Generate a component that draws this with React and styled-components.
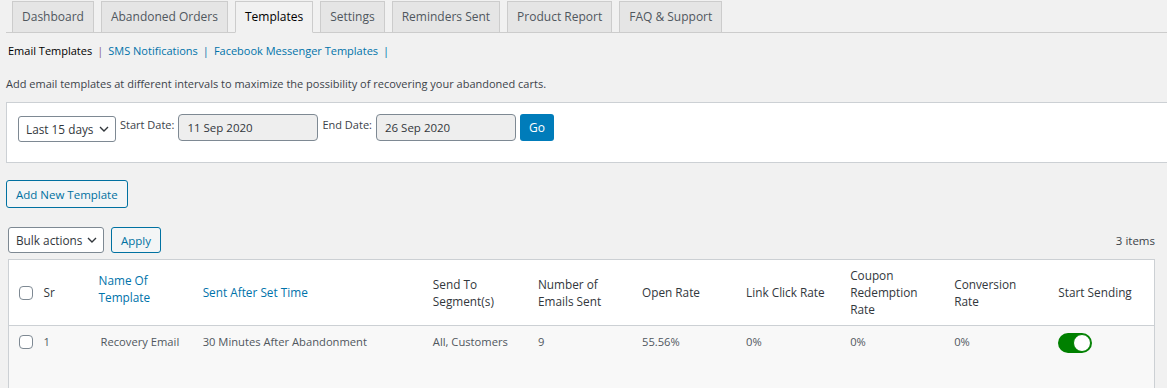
import React from "react";
import styled, { createGlobalStyle } from "styled-components";

const GlobalStyle = createGlobalStyle`
  body {
    margin: 0;
    background: #f1f1f1;
    font-family: "Open Sans", "Noto Sans", sans-serif;
    font-size: 11px;
    color: #3c434a;
    overflow: hidden;
  }
`;

const tabs = [
  "Dashboard",
  "Abandoned Orders",
  "Templates",
  "Settings",
  "Reminders Sent",
  "Product Report",
  "FAQ & Support",
];

const columns = [
  { key: "sr", width: 55, label: ["Sr"] },
  { key: "name", width: 104, label: ["Name Of", "Template"], sortable: true, raise: true },
  { key: "time", width: 230, label: ["Sent After Set Time"], sortable: true },
  { key: "segment", width: 105, label: ["Send To", "Segment(s)"] },
  { key: "sent", width: 104, label: ["Number of", "Emails Sent"] },
  { key: "open", width: 104, label: ["Open Rate"] },
  { key: "click", width: 104, label: ["Link Click Rate"] },
  { key: "coupon", width: 104, label: ["Coupon", "Redemption", "Rate"] },
  { key: "conversion", width: 104, label: ["Conversion", "Rate"] },
  { key: "sending", width: 104, label: ["Start Sending"] },
];

const rows = [
  {
    sr: "1",
    name: "Recovery Email",
    time: "30 Minutes After Abandonment",
    segment: "All, Customers",
    sent: "9",
    open: "55.56%",
    click: "0%",
    coupon: "0%",
    conversion: "0%",
    active: true,
  },
];

function Chevron() {
  return (
    <svg width="10" height="6" viewBox="0 0 10 6" fill="none">
      <path d="M1 1l4 4 4-4" stroke="#32373c" strokeWidth="1.4" />
    </svg>
  );
}

function App() {
  return (
    <Page>
      <GlobalStyle />
      <TabBar>
        {tabs.map((t) => (
          <Tab key={t} $active={t === "Templates"}>
            {t}
          </Tab>
        ))}
      </TabBar>

      <SubNav>
        <Current>Email Templates</Current>
        <Sep $first>|</Sep>
        <SubLink>SMS Notifications</SubLink>
        <Sep>|</Sep>
        <SubLink>Facebook Messenger Templates</SubLink>
        <Sep>|</Sep>
      </SubNav>

      <Intro>
        Add email templates at different intervals to maximize the possibility of
        recovering your abandoned carts.
      </Intro>

      <FilterBox>
        <Select $w={98} $top={2}>
          Last 15 days <Chevron />
        </Select>
        <Label>Start Date:</Label>
        <DateInput>11 Sep 2020</DateInput>
        <Label>End Date:</Label>
        <DateInput>26 Sep 2020</DateInput>
        <PrimaryButton>Go</PrimaryButton>
      </FilterBox>

      <ButtonRow>
        <SecondaryButton $h={28}>Add New Template</SecondaryButton>
      </ButtonRow>

      <TableNav>
        <Actions>
          <Select $w={96}>
            Bulk actions <Chevron />
          </Select>
          <SecondaryButton $h={26}>Apply</SecondaryButton>
        </Actions>
        <Count>3 items</Count>
      </TableNav>

      <Table>
        <colgroup>
          <col style={{ width: 27 }} />
          {columns.map((c) => (
            <col key={c.key} style={{ width: c.width }} />
          ))}
        </colgroup>
        <thead>
          <tr>
            <CheckHead>
              <Checkbox />
            </CheckHead>
            {columns.map((c) => (
              <Th key={c.key} $sortable={c.sortable} $raise={c.raise}>
                {c.label.map((line, i) => (
                  <React.Fragment key={i}>
                    {i > 0 && <br />}
                    {line}
                  </React.Fragment>
                ))}
              </Th>
            ))}
          </tr>
        </thead>
        <tbody>
          {rows.map((r) => (
            <Row key={r.sr}>
              <CheckCell>
                <Checkbox />
              </CheckCell>
              <Td>{r.sr}</Td>
              <Td $nudge={2}>{r.name}</Td>
              <Td>{r.time}</Td>
              <Td>{r.segment}</Td>
              <Td>{r.sent}</Td>
              <Td>{r.open}</Td>
              <Td>{r.click}</Td>
              <Td>{r.coupon}</Td>
              <Td>{r.conversion}</Td>
              <Td>
                <Toggle $on={r.active}>
                  <Knob $on={r.active} />
                </Toggle>
              </Td>
            </Row>
          ))}
        </tbody>
      </Table>
    </Page>
  );
}

const Page = styled.div`
  padding: 1px 0 0 6px;
`;

const TabBar = styled.nav`
  display: flex;
  gap: 7px;
  padding-left: 6px;
  border-bottom: 1px solid #ccc;
`;

const Tab = styled.div`
  margin-bottom: -1px;
  padding: 5px 9px;
  line-height: 20px;
  font-size: 12px;
  font-weight: 500;
  border: 1px solid #ccc;
  border-bottom-color: ${(p) => (p.$active ? "#f1f1f1" : "#ccc")};
  background: ${(p) => (p.$active ? "#f1f1f1" : "#e5e5e5")};
  color: ${(p) => (p.$active ? "#000" : "#50575e")};
`;

const SubNav = styled.div`
  display: flex;
  align-items: center;
  margin-top: 6px;
  padding-left: 2px;
  line-height: 24px;
`;

const Current = styled.span`
  color: #000;
  font-weight: 500;
`;

const SubLink = styled.span`
  color: #0073aa;
`;

const Sep = styled.span`
  margin: 0 5px;
  color: ${(p) => (p.$first ? "#8b5c86" : "#0073aa")};
`;

const Intro = styled.p`
  margin: 12px 0 9px;
  line-height: 18px;
`;

const FilterBox = styled.div`
  display: flex;
  align-items: flex-start;
  gap: 4px;
  margin-right: -20px;
  padding: 11px 11px 20px;
  background: #fff;
  border: 1px solid #ccd0d4;
`;

const Select = styled.div`
  box-sizing: border-box;
  display: flex;
  align-items: center;
  justify-content: space-between;
  width: ${(p) => p.$w}px;
  height: 26px;
  margin-top: ${(p) => p.$top || 0}px;
  padding: 0 6px 0 7px;
  background: #fff;
  border: 1px solid #7e8993;
  border-radius: 3px;
  color: #32373c;
  font-size: 11.8px;
`;

const Label = styled.span`
  line-height: 22px;
  color: #3c434a;
`;

const DateInput = styled.div`
  box-sizing: border-box;
  width: 140px;
  height: 27px;
  padding: 0 8px;
  line-height: 25px;
  background: #eee;
  border: 1px solid #7e8993;
  border-radius: 4px;
  color: #32373c;
  font-size: 11.5px;
`;

const PrimaryButton = styled.div`
  box-sizing: border-box;
  height: 27px;
  padding: 0 9px;
  line-height: 27px;
  background: #007cba;
  border-radius: 3px;
  color: #fff;
  font-size: 12px;
`;

const ButtonRow = styled.div`
  margin-top: 17px;
`;

const SecondaryButton = styled.div`
  box-sizing: border-box;
  display: inline-flex;
  align-items: center;
  height: ${(p) => p.$h}px;
  padding: 0 9px;
  background: #f3f5f6;
  border: 1px solid #0071a1;
  border-radius: 3px;
  color: #0071a1;
  font-size: 11.5px;
`;

const TableNav = styled.div`
  display: flex;
  align-items: center;
  justify-content: space-between;
  width: 1147px;
  margin: 19px 0 6px 2px;
`;

const Actions = styled.div`
  display: flex;
  gap: 7px;
`;

const Count = styled.span`
  color: #3c434a;
  font-size: 11.5px;
`;

const Table = styled.table`
  width: 1147px;
  margin-left: 2px;
  table-layout: fixed;
  border-collapse: collapse;
  border: 1px solid #ccd0d4;
  background: #fff;
`;

const Th = styled.th`
  padding: ${(p) => (p.$raise ? "7px 8px 15px" : "7px 8px")};
  line-height: 17px;
  font-size: 11.8px;
  text-align: left;
  font-weight: 400;
  vertical-align: middle;
  white-space: nowrap;
  color: ${(p) => (p.$sortable ? "#0073aa" : "#32373c")};
  border-bottom: 1px solid #ccd0d4;
`;

const CheckHead = styled.th`
  padding: 0 0 0 10px;
  vertical-align: middle;
  text-align: left;
  border-bottom: 1px solid #ccd0d4;
`;

const Row = styled.tr`
  background: #f8f8f8;
`;

const Td = styled.td`
  height: 60px;
  padding: 7px 8px 7px ${(p) => 8 + (p.$nudge || 0)}px;
  line-height: 17px;
  font-size: 11.2px;
  vertical-align: top;
  white-space: nowrap;
  color: #50575e;
`;

const CheckCell = styled.td`
  padding: 9px 0 0 10px;
  vertical-align: top;
`;

const Checkbox = styled.div`
  box-sizing: border-box;
  width: 14px;
  height: 14px;
  background: #fff;
  border: 1px solid #7e8993;
  border-radius: 4px;
`;

const Toggle = styled.div`
  position: relative;
  width: 34px;
  height: 20px;
  border-radius: 10px;
  background: ${(p) => (p.$on ? "#008000" : "#ccc")};
`;

const Knob = styled.div`
  position: absolute;
  top: 1px;
  left: ${(p) => (p.$on ? "15px" : "1px")};
  box-sizing: border-box;
  width: 18px;
  height: 18px;
  border-radius: 50%;
  background: #fff;
  border: 1px solid #008000;
`;

export default App;
